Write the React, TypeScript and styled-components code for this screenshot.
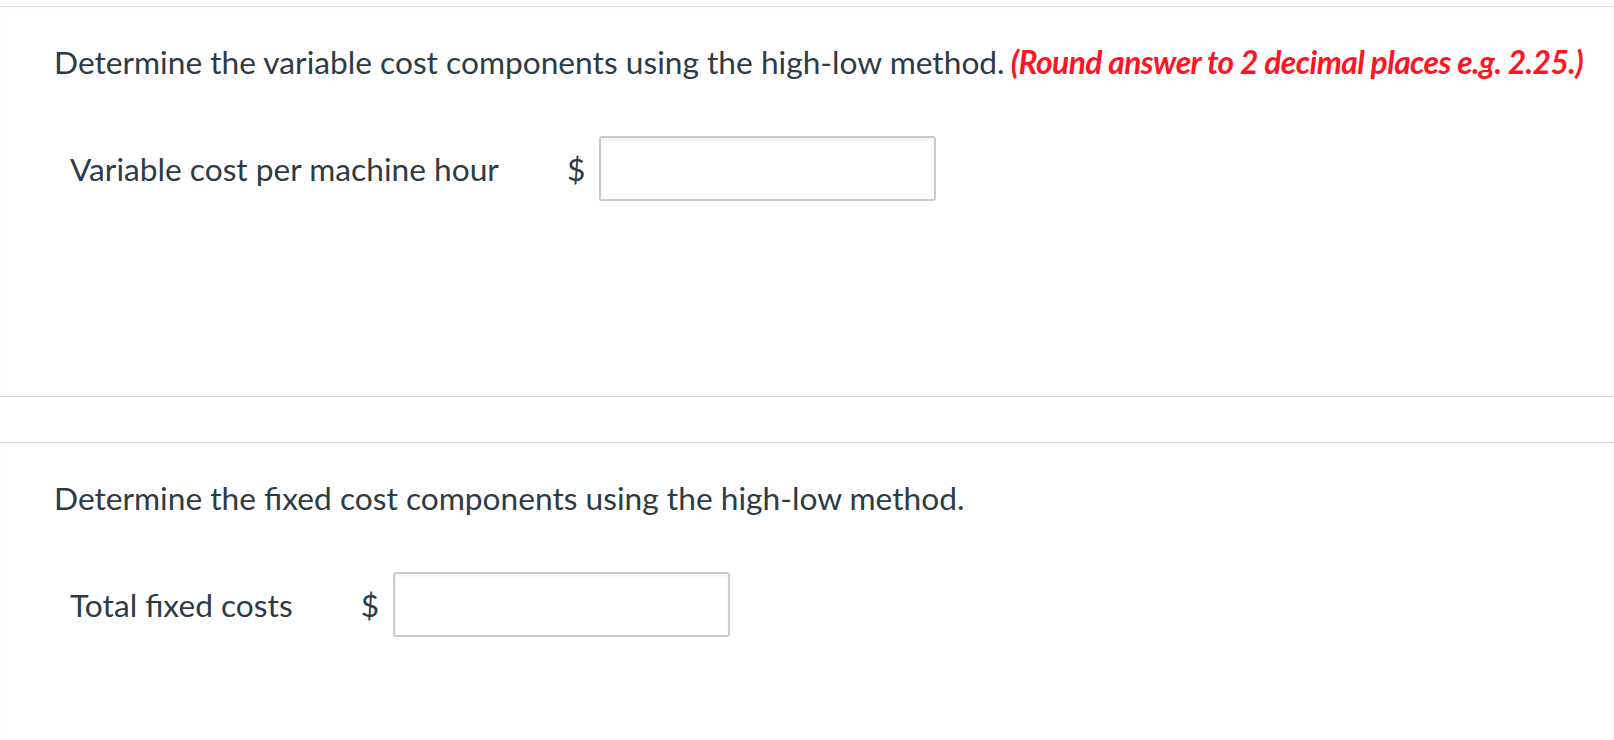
import React from "react";
import styled, { createGlobalStyle } from "styled-components";

const GlobalStyle = createGlobalStyle`
  html, body {
    margin: 0;
    padding: 0;
    background: #ffffff;
    overflow: hidden;
  }
  body {
    font-family: Lato, "Noto Sans", "Liberation Sans", sans-serif;
    color: #2d3b45;
  }
`;

const Page = styled.div`
  display: flex;
  flex-direction: column;
  gap: 45px;
  padding-top: 6px;
  height: 740px;
  box-sizing: border-box;
  overflow: hidden;
`;

const Question = styled.section`
  flex: none;
  height: 391px;
  border-top: 1px solid #d9d9d9;
  border-bottom: 1px solid #d9d9d9;
  box-shadow: inset 0 1px 2px rgba(0, 0, 0, 0.03);
  padding: 31px 0 0 54px;
  box-sizing: border-box;
  display: flex;
  flex-direction: column;
  gap: 50px;
`;

const Prompt = styled.p`
  margin: 0;
  font-size: 31.7px;
  line-height: 48px;
  font-weight: 400;
  color: #2d3b45;
  white-space: nowrap;
`;

const Hint = styled.strong`
  margin-left: -2px;
  color: #ff1423;
  font-weight: 700;
  font-style: italic;
  letter-spacing: -0.55px;
`;

const AnswerRow = styled.div`
  display: flex;
  align-items: center;
  padding-left: 16px;
  height: 65px;
`;

const Label = styled.span`
  font-size: 31.7px;
  line-height: 48px;
  color: #2d3b45;
  margin-right: 68px;
  white-space: nowrap;
`;

const Currency = styled.span`
  font-size: 31.7px;
  line-height: 48px;
  color: #2d3b45;
  margin-right: 14px;
`;

const AnswerInput = styled.input`
  box-sizing: border-box;
  width: 337px;
  height: 65px;
  border: 2px solid #cbcbcb;
  border-radius: 3px;
  background: #ffffff;
  box-shadow: inset 0 2px 3px rgba(0, 0, 0, 0.06);
  padding: 0 12px;
  font-family: inherit;
  font-size: 30px;
  color: #2d3b45;
  outline: none;
`;

export default function App() {
  return (
    <>
      <GlobalStyle />
      <Page>
        <Question>
          <Prompt>
            Determine the variable cost components using the high-low method.{" "}
            <Hint>(Round answer to 2 decimal places e.g. 2.25.)</Hint>
          </Prompt>
          <AnswerRow>
            <Label>Variable cost per machine hour</Label>
            <Currency>$</Currency>
            <AnswerInput type="text" aria-label="Variable cost per machine hour" />
          </AnswerRow>
        </Question>
        <Question>
          <Prompt>Determine the fixed cost components using the high-low method.</Prompt>
          <AnswerRow>
            <Label>Total fixed costs</Label>
            <Currency>$</Currency>
            <AnswerInput type="text" aria-label="Total fixed costs" />
          </AnswerRow>
        </Question>
      </Page>
    </>
  );
}
